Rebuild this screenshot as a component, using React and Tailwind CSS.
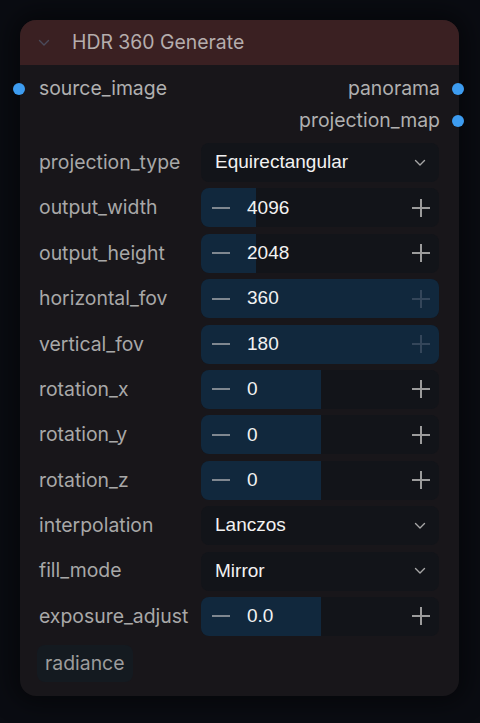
const font = { fontFamily: "Inter, 'Noto Sans', sans-serif" };
const valueFont = { fontFamily: "'Liberation Sans', Arial, sans-serif" };

const widgets = [
  { name: "projection_type", kind: "combo", value: "Equirectangular" },
  { name: "output_width", kind: "number", value: "4096", fill: 55 },
  { name: "output_height", kind: "number", value: "2048", fill: 55 },
  { name: "horizontal_fov", kind: "number", value: "360", fill: 238, max: true },
  { name: "vertical_fov", kind: "number", value: "180", fill: 238, max: true },
  { name: "rotation_x", kind: "number", value: "0", fill: 120 },
  { name: "rotation_y", kind: "number", value: "0", fill: 120 },
  { name: "rotation_z", kind: "number", value: "0", fill: 120 },
  { name: "interpolation", kind: "combo", value: "Lanczos" },
  { name: "fill_mode", kind: "combo", value: "Mirror" },
  { name: "exposure_adjust", kind: "number", value: "0.0", fill: 120 },
];

function Chevron({ className }) {
  return (
    <svg viewBox="0 0 12 8" className={className} fill="none" stroke="currentColor" strokeWidth="1.4" strokeLinecap="round" strokeLinejoin="round">
      <path d="M1.5 1.5 6 6l4.5-4.5" />
    </svg>
  );
}

function Minus() {
  return (
    <svg viewBox="0 0 18 18" className="w-[18px] h-[18px]" stroke="currentColor" strokeWidth="2">
      <path d="M0 9h18" />
    </svg>
  );
}

function Plus() {
  return (
    <svg viewBox="0 0 18 18" className="w-[18px] h-[18px]" stroke="currentColor" strokeWidth="2">
      <path d="M0 9h18M9 0v18" />
    </svg>
  );
}

function Widget({ w }) {
  if (w.kind === "combo") {
    return (
      <div className="relative flex items-center w-[238px] h-[39px] rounded-lg bg-[#121419] pl-[14px] pr-[13px]">
        <span className="flex-1 text-[19px] text-[#f2f2f2]" style={valueFont}>{w.value}</span>
        <Chevron className="w-[12px] h-[8px] text-[#a6a6a6]" />
      </div>
    );
  }
  return (
    <div className="relative flex items-center w-[238px] h-[39px] rounded-lg bg-[#121419] overflow-hidden">
      <div className="absolute left-0 top-0 bottom-0 bg-[#11283d]" style={{ width: w.fill }} />
      <div className="relative flex items-center w-full pl-[11px] pr-[9px]">
        <span className="text-[#7f8790]">
          <Minus />
        </span>
        <span className="ml-[17px] flex-1 text-[19px] text-[#f2f2f2]" style={valueFont}>{w.value}</span>
        <span className={w.max ? "text-[#34465a]" : "text-[#9c9c9c]"}>
          <Plus />
        </span>
      </div>
    </div>
  );
}

export default function App() {
  return (
    <div className="min-h-screen bg-[#0a0c12] pt-[20px] pl-[20px]" style={font}>
      <div className="relative w-[439px] rounded-[16px] bg-[#18161a] shadow-[0_0_24px_8px_rgba(0,0,0,0.45)]">
        <div className="flex items-center h-[45px] rounded-t-[16px] bg-[#3a2022] pl-[18px]">
          <Chevron className="w-[12px] h-[8px] text-[#4a4a5a]" />
          <span className="ml-[22px] text-[19.4px] text-[#b5adad]">HDR 360 Generate</span>
        </div>

        <div className="pt-[8px] pb-[14px]">
          <div className="relative flex items-center justify-between h-[32px] pl-[19px] pr-[19px]">
            <span className="absolute left-[-7px] top-[10px] w-[12px] h-[12px] rounded-full bg-[#3d9cf0]" />
            <span className="text-[19.4px] text-[#b0b0b0]">source_image</span>
            <span className="text-[19.4px] text-[#b0b0b0]">panorama</span>
            <span className="absolute right-[-5px] top-[10px] w-[12px] h-[12px] rounded-full bg-[#3d9cf0]" />
          </div>
          <div className="relative flex items-center justify-end h-[32px] pr-[19px]">
            <span className="text-[19.4px] text-[#b0b0b0]">projection_map</span>
            <span className="absolute right-[-5px] top-[10px] w-[12px] h-[12px] rounded-full bg-[#3d9cf0]" />
          </div>

          <div className="flex flex-col gap-[6.4px] mt-[6px]">
            {widgets.map((w) => (
              <div key={w.name} className="flex items-center pl-[19px]">
                <span className="w-[162px] text-[19.4px] text-[#a8a8a8] whitespace-nowrap">{w.name}</span>
                <Widget w={w} />
              </div>
            ))}
          </div>

          <div className="mt-[9px] pl-[17px]">
            <span className="inline-flex items-center h-[37px] px-[8px] rounded-lg bg-[#141a20] text-[19.4px] text-[#9c9c9c]">
              radiance
            </span>
          </div>
        </div>
      </div>
    </div>
  );
}
